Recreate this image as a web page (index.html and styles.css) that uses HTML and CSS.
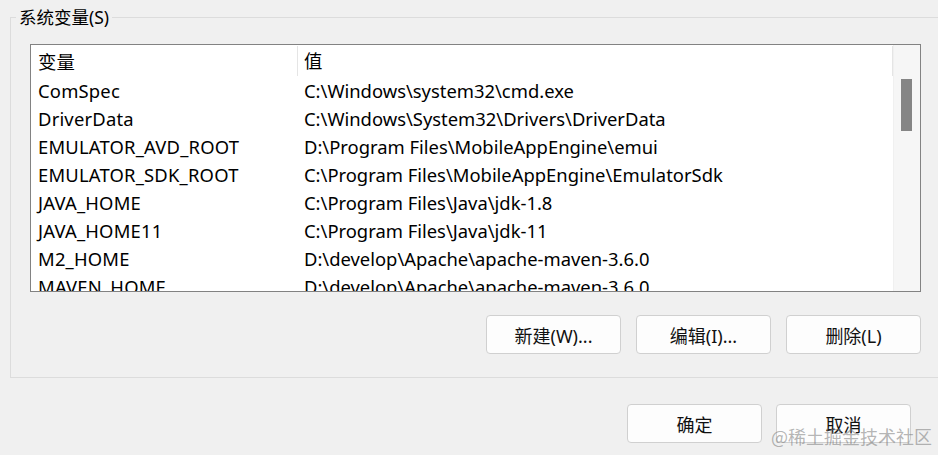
FILE: index.html
```html
<!DOCTYPE html>
<html lang="zh-CN">
<head>
    <meta charset="UTF-8">
    <title>环境变量</title>
    <link rel="stylesheet" href="styles.css">
</head>
<body>
    <fieldset class="var-group">
        <legend>系统变量(S)</legend>

        <div class="var-list">
            <div class="var-table">
                <div class="var-row var-head">
                    <span class="col-name">变量</span>
                    <span class="col-value">值</span>
                </div>
                <div class="var-row"><span class="col-name">ComSpec</span><span class="col-value">C:\Windows\system32\cmd.exe</span></div>
                <div class="var-row"><span class="col-name">DriverData</span><span class="col-value">C:\Windows\System32\Drivers\DriverData</span></div>
                <div class="var-row"><span class="col-name">EMULATOR_AVD_ROOT</span><span class="col-value">D:\Program Files\MobileAppEngine\emui</span></div>
                <div class="var-row"><span class="col-name">EMULATOR_SDK_ROOT</span><span class="col-value">C:\Program Files\MobileAppEngine\EmulatorSdk</span></div>
                <div class="var-row"><span class="col-name">JAVA_HOME</span><span class="col-value">C:\Program Files\Java\jdk-1.8</span></div>
                <div class="var-row"><span class="col-name">JAVA_HOME11</span><span class="col-value">C:\Program Files\Java\jdk-11</span></div>
                <div class="var-row"><span class="col-name">M2_HOME</span><span class="col-value">D:\develop\Apache\apache-maven-3.6.0</span></div>
                <div class="var-row"><span class="col-name">MAVEN_HOME</span><span class="col-value">D:\develop\Apache\apache-maven-3.6.0</span></div>
            </div>
            <div class="scrollbar">
                <div class="scroll-thumb"></div>
            </div>
        </div>

        <div class="btn-row">
            <button type="button" class="btn">新建(W)...</button>
            <button type="button" class="btn">编辑(I)...</button>
            <button type="button" class="btn">删除(L)</button>
        </div>
    </fieldset>

    <div class="dialog-actions">
        <button type="button" class="btn">确定</button>
        <button type="button" class="btn">取消</button>
    </div>

    <div class="watermark">@稀土掘金技术社区</div>
</body>
</html>
```

FILE: styles.css
```css
/* 全局 */
body {
    margin: 0;
    width: 938px;
    height: 455px;
    overflow: hidden;
    position: relative;
    background-color: #f0f0f0;
    color: #000;
    font-family: "Noto Sans", "Noto Sans CJK SC", sans-serif;
    font-size: 18.4px;
}

/* 分组框 */
.var-group {
    margin: 8px 0 0 10px;
    width: 960px;
    height: 370px;
    padding: 18px 0 0 19px;
    border: 1px solid #dcdcdc;
    border-right: none;
    box-sizing: border-box;
}

.var-group legend {
    margin-left: -14px;
    padding: 0 3px;
    line-height: 18px;
    font-size: 17.5px;
}

/* 列表 */
.var-list {
    display: flex;
    width: 891px;
    height: 248px;
    border: 1px solid #828282;
    box-sizing: border-box;
    background-color: #fff;
    overflow: hidden;
}

.var-table {
    flex: 1;
}

.var-row {
    display: flex;
    height: 28px;
    align-items: center;
    white-space: nowrap;
}

.var-head {
    height: 31px;
}

.col-name {
    width: 266px;
    padding-left: 7px;
    box-sizing: border-box;
    letter-spacing: 0.2px;
}

.col-value {
    padding-left: 7px;
}

.var-head .col-value {
    border-left: 1px solid #e5e5e5;
    height: 30px;
    line-height: 30px;
    padding-left: 6px;
    flex: 1;
    border-right: 1px solid #e5e5e5;
}

.scrollbar {
    width: 27px;
    background-color: #f6f6f6;
    border-left: 1px solid #f0f0f0;
    padding-top: 34px;
    box-sizing: border-box;
}

.scroll-thumb {
    width: 11px;
    height: 52px;
    margin-left: 7px;
    background-color: #858585;
}

/* 按钮 */
.btn-row {
    display: flex;
    justify-content: flex-end;
    gap: 15px;
    width: 891px;
    margin-top: 23px;
}

.btn {
    width: 135px;
    height: 39px;
    border: 1px solid #d0d0d0;
    border-radius: 4px;
    background-color: #fdfdfd;
    font-family: inherit;
    font-size: 18px;
    color: #111;
    padding: 0;
}

.dialog-actions {
    display: flex;
    justify-content: flex-end;
    gap: 14px;
    width: 911px;
    margin-top: 26px;
}

/* 水印 */
.watermark {
    position: absolute;
    right: 6px;
    bottom: 6px;
    font-size: 18px;
    color: rgba(120, 120, 120, 0.55);
    font-family: "Noto Sans CJK SC", sans-serif;
}
```
